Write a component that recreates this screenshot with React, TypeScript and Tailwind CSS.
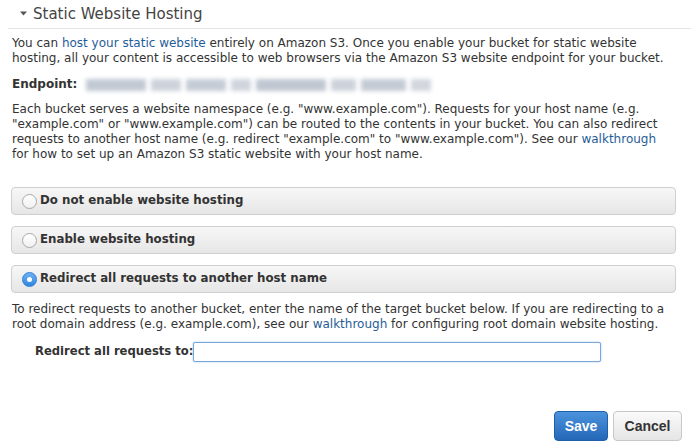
import React from "react";

const font = { fontFamily: '"DejaVu Sans", Verdana, sans-serif' };

function Radio({ checked }: { checked?: boolean }) {
    if (checked) {
        return (
            <span className="inline-flex h-[15px] w-[15px] shrink-0 items-center justify-center rounded-full border border-[#2f7fd6] bg-gradient-to-b from-[#6fb2f3] to-[#2d84e0]">
                <span className="h-[5px] w-[5px] rounded-full bg-white" />
            </span>
        );
    }
    return <span className="inline-block h-[15px] w-[15px] shrink-0 rounded-full border border-[#a9a9a9] bg-gradient-to-b from-white to-[#f1f1f1]" />;
}

function Option({ label, checked }: { label: string; checked?: boolean }) {
    return (
        <div className="mx-[11px] flex h-[28px] items-center gap-[3px] rounded-[4px] border border-[#cfcfcf] bg-gradient-to-b from-[#f7f7f7] to-[#e6e6e6] pl-[10px] text-[11.8px] font-bold text-[#333]">
            <Radio checked={checked} />
            <span>{label}</span>
        </div>
    );
}

export default function App() {
    return (
        <div className="h-[446px] w-[691px] overflow-hidden bg-white text-[#333]" style={font}>
            <div className="ml-[8px] flex h-[29px] items-center gap-[6px] border-b border-[#e4e4e4] pl-[12px]">
                <svg width="7" height="5" viewBox="0 0 7 5" className="mt-[-1px]">
                    <path d="M0 0.5 L7 0.5 L3.5 4.5 Z" fill="#555" />
                </svg>
                <span className="text-[15px] text-[#444]">Static Website Hosting</span>
            </div>

            <div className="pl-[12px] pr-[18px] pt-[7px] text-[12px] leading-[15px]">
                <p>
                    You can <span className="text-[#1f5d99]">host your static website</span> entirely on Amazon S3. Once you enable your bucket for static website hosting, all your content is accessible to web browsers via the Amazon S3 website endpoint for your bucket.
                </p>
                <div className="mt-[11px] flex items-center">
                    <span className="font-bold">Endpoint:</span>
                    <span className="ml-[9px] flex h-[12px] w-[352px] gap-[5px] blur-[2px]">
                        <span className="w-[60px] bg-[#c2c9d3]" />
                        <span className="w-[30px] bg-[#ced3db]" />
                        <span className="w-[40px] bg-[#c5ccd6]" />
                        <span className="w-[20px] bg-[#d0d5dd]" />
                        <span className="w-[70px] bg-[#c0c7d2]" />
                        <span className="w-[25px] bg-[#cdd2da]" />
                        <span className="w-[45px] bg-[#c4cbd5]" />
                        <span className="w-[20px] bg-[#d2d7de]" />
                    </span>
                </div>
                <p className="mt-[10px]">
                    Each bucket serves a website namespace (e.g. "www.example.com"). Requests for your host name (e.g. "example.com" or "www.example.com") can be routed to the contents in your bucket. You can also redirect requests to another host name (e.g. redirect "example.com" to "www.example.com"). See our <span className="text-[#1f5d99]">walkthrough</span> for how to set up an Amazon S3 static website with your host name.
                </p>
            </div>

            <div className="mt-[25px] flex flex-col gap-[11px] pr-[4px]">
                <Option label="Do not enable website hosting" />
                <Option label="Enable website hosting" />
                <Option label="Redirect all requests to another host name" checked />
            </div>

            <p className="pl-[12px] pr-[18px] pt-[9px] text-[12px] leading-[15px]">
                To redirect requests to another bucket, enter the name of the target bucket below. If you are redirecting to a root domain address (e.g. example.com), see our <span className="text-[#1f5d99]">walkthrough</span> for configuring root domain website hosting.
            </p>

            <div className="mt-[10px] flex items-center pl-[35px]">
                <span className="text-[11.6px] font-bold">Redirect all requests to:</span>
                <input className="h-[20px] w-[408px] rounded-[2px] border border-[#7aa7d9] bg-white shadow-[0_0_2px_#9cc4ee] outline-none" />
            </div>

            <div className="mt-[49px] flex justify-end gap-[5px] pr-[9px]" style={{ fontFamily: '"Liberation Sans", Arial, sans-serif' }}>
                <button className="h-[30px] w-[54px] rounded-[4px] border border-[#1f5fa8] bg-gradient-to-b from-[#4b93dc] to-[#2467b8] text-[14px] font-bold text-white">
                    Save
                </button>
                <button className="h-[30px] w-[69px] rounded-[4px] border border-[#c8c8c8] bg-gradient-to-b from-[#fafafa] to-[#e5e5e5] text-[14px] font-bold text-[#333]">
                    Cancel
                </button>
            </div>
        </div>
    );
}
